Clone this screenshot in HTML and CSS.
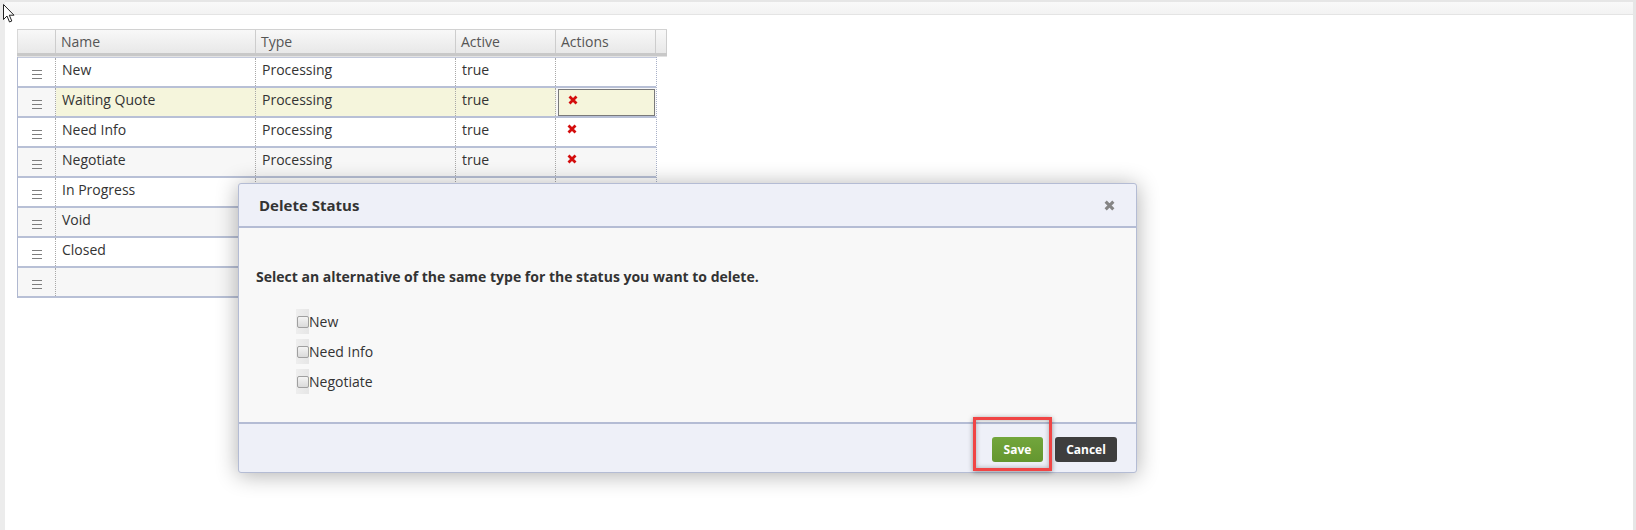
FILE: index.html
```html
<!DOCTYPE html>
<html lang="en">
<head>
    <meta charset="UTF-8">
    <meta name="viewport" content="width=device-width, initial-scale=1.0">
    <title>Statuses</title>
    <link rel="stylesheet" href="styles.css">
</head>
<body>
    <div class="page">
        <div class="toolbar"></div>

        <div class="grid">
            <div class="grid-head">
                <div class="hcell"></div>
                <div class="hcell">Name</div>
                <div class="hcell">Type</div>
                <div class="hcell">Active</div>
                <div class="hcell">Actions</div>
                <div class="hcell"></div>
            </div>
            <div class="grid-body">
                <div class="grid-row">
                    <div class="cell handle"><span class="grip"></span></div>
                    <div class="cell">New</div>
                    <div class="cell">Processing</div>
                    <div class="cell">true</div>
                    <div class="cell"></div>
                </div>
                <div class="grid-row alt selected">
                    <div class="cell handle"><span class="grip"></span></div>
                    <div class="cell">Waiting Quote</div>
                    <div class="cell">Processing</div>
                    <div class="cell">true</div>
                    <div class="cell action focus"><svg class="del" viewBox="0 0 10 10"><path d="M1.5 1.5 L8.5 8.5 M8.5 1.5 L1.5 8.5"/></svg></div>
                </div>
                <div class="grid-row">
                    <div class="cell handle"><span class="grip"></span></div>
                    <div class="cell">Need Info</div>
                    <div class="cell">Processing</div>
                    <div class="cell">true</div>
                    <div class="cell action"><svg class="del" viewBox="0 0 10 10"><path d="M1.5 1.5 L8.5 8.5 M8.5 1.5 L1.5 8.5"/></svg></div>
                </div>
                <div class="grid-row alt">
                    <div class="cell handle"><span class="grip"></span></div>
                    <div class="cell">Negotiate</div>
                    <div class="cell">Processing</div>
                    <div class="cell">true</div>
                    <div class="cell action"><svg class="del" viewBox="0 0 10 10"><path d="M1.5 1.5 L8.5 8.5 M8.5 1.5 L1.5 8.5"/></svg></div>
                </div>
                <div class="grid-row">
                    <div class="cell handle"><span class="grip"></span></div>
                    <div class="cell">In Progress</div>
                    <div class="cell"></div>
                    <div class="cell"></div>
                    <div class="cell"></div>
                </div>
                <div class="grid-row alt">
                    <div class="cell handle"><span class="grip"></span></div>
                    <div class="cell">Void</div>
                    <div class="cell"></div>
                    <div class="cell"></div>
                    <div class="cell"></div>
                </div>
                <div class="grid-row">
                    <div class="cell handle"><span class="grip"></span></div>
                    <div class="cell">Closed</div>
                    <div class="cell"></div>
                    <div class="cell"></div>
                    <div class="cell"></div>
                </div>
                <div class="grid-row alt">
                    <div class="cell handle"><span class="grip"></span></div>
                    <div class="cell"></div>
                    <div class="cell"></div>
                    <div class="cell"></div>
                    <div class="cell"></div>
                </div>
            </div>
        </div>
    </div>

    <!-- Модальное окно удаления -->
    <div class="dialog">
        <div class="dialog-head">
            <span class="dialog-title">Delete Status</span>
            <svg class="dialog-close" viewBox="0 0 10 10"><path d="M1.5 1.5 L8.5 8.5 M8.5 1.5 L1.5 8.5"/></svg>
        </div>
        <div class="dialog-body">
            <p class="dialog-text">Select an alternative of the same type for the status you want to delete.</p>
            <div class="options">
                <label class="option"><span class="check"><span class="box"></span></span>New</label>
                <label class="option"><span class="check"><span class="box"></span></span>Need Info</label>
                <label class="option"><span class="check"><span class="box"></span></span>Negotiate</label>
            </div>
        </div>
        <div class="dialog-foot">
            <button class="btn btn-save">Save</button>
            <button class="btn btn-cancel">Cancel</button>
        </div>
    </div>

    <div class="mark"></div>

    <svg class="cursor" viewBox="0 0 12 19"><path d="M0.5 0.5 L0.5 15.5 L4 12 L6.5 18 L8.8 17 L6.3 11.2 L11 11.2 Z"/></svg>
</body>
</html>
```

FILE: styles.css
```css
body {
    margin: 0;
    padding: 0;
    background-color: #ffffff;
    font-family: 'Open Sans', sans-serif;
    color: #333;
    height: 530px;
    overflow: hidden;
}

.page {
    height: 530px;
    border-left: 5px solid #ececec;
    border-right: 3px solid #e6e6e6;
    box-sizing: border-box;
}

.toolbar {
    height: 12px;
    border-top: 2px solid #e6e6e6;
    border-bottom: 1px solid #e4e4e4;
    background: linear-gradient(#f9f9f9, #f3f3f3);
}

.grid {
    margin: 14px 0 0 12px;
    width: 650px;
    font-size: 14px;
}

.grid-head {
    display: grid;
    grid-template-columns: 39px 200px 200px 100px 100px 11px;
    height: 23px;
    background: linear-gradient(#f8f8f8, #e8e8e8);
    border-top: 1px solid #d2d2d2;
    border-bottom: 3px solid #c8c8c8;
    box-shadow: 0 1px 0 #e2e2e2;
}

.hcell {
    border-right: 1px solid #cdcdcd;
    color: #555;
    padding-left: 5px;
    line-height: 23px;
}

.hcell:first-child {
    border-left: 1px solid #d8d8d8;
}

.grid-body {
    width: 640px;
    border-left: 1px solid #b0b8d0;
    border-right: 1px dotted #a8b0c8;
    box-sizing: border-box;
    margin-top: 1px;
}

.grid-row {
    display: grid;
    grid-template-columns: 38px 200px 200px 100px 100px;
    height: 28px;
    border-bottom: 2px solid #b8c0d6;
    background: #fff;
}

.grid-row:first-child {
    border-top: 1px solid #c4cadc;
}

.grid-row.alt {
    background: #f7f7f7;
}

.grid-row.selected .cell {
    background: #f5f5dc;
}

.grid-row.selected .cell.handle {
    background: #f7f7f7;
}

.cell {
    border-right: 1px dotted #a8a8a8;
    padding-left: 6px;
    line-height: 24px;
    white-space: nowrap;
    box-sizing: border-box;
}

.cell:last-child {
    border-right: none;
}

.cell.handle {
    display: flex;
    align-items: center;
    justify-content: center;
    padding: 4px 0 0 0;
}

.grip {
    width: 10px;
    height: 7px;
    border-top: 1px solid #7e7e7e;
    border-bottom: 1px solid #7e7e7e;
    position: relative;
}

.grip::after {
    content: '';
    position: absolute;
    left: 0;
    right: 0;
    top: 3px;
    border-top: 1px solid #7e7e7e;
}

.cell.action {
    padding: 6px 0 0 11px;
}

.cell.focus {
    border: 1px solid #7a7a7a;
    padding: 5px 0 0 9px;
    margin: 1px 1px 0 2px;
}

.del {
    width: 10px;
    height: 10px;
    display: block;
}

.del path {
    stroke: #d40d0d;
    stroke-width: 2.8;
    fill: none;
}

/* диалог */
.dialog {
    position: absolute;
    left: 238px;
    top: 183px;
    width: 899px;
    height: 290px;
    box-sizing: border-box;
    border: 1px solid #b4bcd4;
    border-radius: 3px;
    background: #eef0f8;
    box-shadow: 0 2px 22px rgba(0, 0, 0, 0.32);
    display: flex;
    flex-direction: column;
}

.dialog-head {
    height: 42px;
    border-bottom: 2px solid #b4bcd4;
    display: flex;
    align-items: center;
    justify-content: space-between;
    padding: 0 21px 0 20px;
}

.dialog-title {
    font-weight: bold;
    font-size: 15px;
    color: #333;
}

.dialog-close {
    width: 11px;
    height: 11px;
}

.dialog-close path {
    stroke: #858585;
    stroke-width: 2.8;
    fill: none;
}

.dialog-body {
    height: 196px;
    box-sizing: border-box;
    background: #f8f8f8;
    border-bottom: 2px solid #b4bcd4;
    padding: 39px 17px 0 17px;
}

.dialog-text {
    margin: 0;
    font-size: 14px;
    font-weight: bold;
    line-height: 20px;
}

.options {
    margin-top: 19px;
    padding-left: 40px;
    display: flex;
    flex-direction: column;
}

.option {
    display: flex;
    align-items: center;
    height: 30px;
    font-size: 14px;
}

.check {
    width: 13px;
    height: 25px;
    background: linear-gradient(90deg, #eeeeee, #e6e6e6);
    display: flex;
    align-items: center;
    justify-content: center;
}

.box {
    width: 12px;
    height: 12px;
    border: 1px solid #a0a0a0;
    border-radius: 2px;
    background: linear-gradient(#f4f4f4, #dadada);
    box-sizing: border-box;
    margin-top: 2px;
}

.dialog-foot {
    flex: 1;
    display: flex;
    justify-content: flex-end;
    align-items: flex-start;
    gap: 12px;
    padding: 13px 19px 0 0;
}

.btn {
    height: 25px;
    border: none;
    border-radius: 3px;
    color: #fff;
    font-family: 'Open Sans', sans-serif;
    font-weight: bold;
    font-size: 12px;
    padding: 0;
}

.btn-save {
    width: 51px;
    background: linear-gradient(#72a63c, #64962f);
}

.btn-cancel {
    width: 62px;
    background: #3e3e3e;
}

.mark {
    position: absolute;
    left: 973px;
    top: 417px;
    width: 73px;
    height: 48px;
    border: 3px solid #f04545;
    box-shadow: 0 1px 5px rgba(0, 0, 0, 0.4), inset 0 0 5px rgba(0, 0, 0, 0.3);
}

.cursor {
    position: absolute;
    left: 3px;
    top: 4px;
    width: 12px;
    height: 19px;
}

.cursor path {
    fill: #fff;
    stroke: #222;
    stroke-width: 1;
}
```
